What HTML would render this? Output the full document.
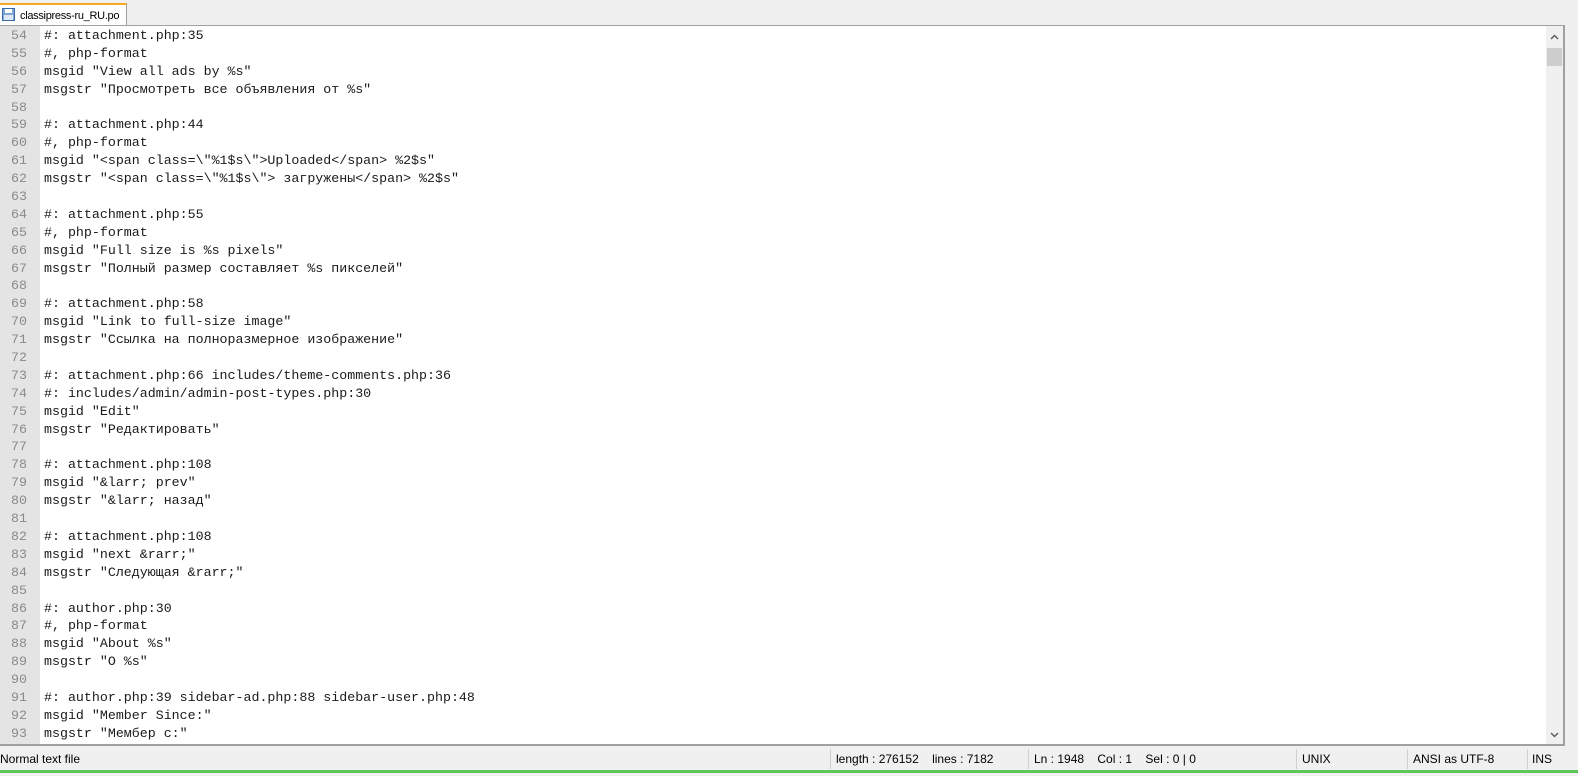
<!DOCTYPE html><html><head><meta charset="utf-8"><style>
body{margin:0;width:1578px;height:776px;background:#f0f0f0;position:relative;overflow:hidden;font-family:"Liberation Sans",sans-serif}
.tabbar{position:absolute;left:0;top:0;width:1578px;height:24px;background:#f0f0f0}
.tab{position:absolute;left:0;top:3px;width:127px;height:22px;background:#fff;border-top:2px solid #f5a623;border-right:1px solid #a0a0a0;box-sizing:border-box;font-size:11px;letter-spacing:-0.3px}
.tab span{position:absolute;left:20px;top:5px}
.ed{position:absolute;left:0;top:25px;width:1565px;height:721px;background:#fff;border-top:1px solid #a0a0a0;border-right:2px solid #a0a0a0;border-bottom:2px solid #a0a0a0;box-sizing:border-box;overflow:hidden}
.gut{position:absolute;left:0;top:0;width:40px;height:100%;background:#e4e4e4}
.lines{position:absolute;left:0;top:1px;font-family:"Liberation Mono",monospace;font-size:13.3px;color:#1a1a1a}
.lines div{height:17.9px;line-height:17.9px;white-space:pre}
.ln{display:inline-block;width:27px;text-align:right;color:#8a8a8a;margin-right:17px}
.sb{position:absolute;left:1546px;top:0;width:17px;height:100%;background:#f0f0f0}
.st{position:absolute;top:747px;height:24px;font-size:12px;line-height:24px;color:#000}
.sep{position:absolute;top:749px;width:1px;height:20px;background:#d0d0d0}
.green{position:absolute;left:0;top:770px;width:1578px;height:3px;background:#5cc85c}
</style></head><body>
<div class="tabbar"><div class="tab">
<svg style="position:absolute;left:2px;top:3px" width="13" height="13" viewBox="0 0 13 13"><rect x="0.5" y="0.5" width="12" height="12" fill="#7fa6d6" stroke="#3a6aa8"/><rect x="3" y="1" width="7" height="4" fill="#fff"/><rect x="2" y="7" width="9" height="5" fill="#dfe8f5"/></svg>
<span>classipress-ru_RU.po</span></div></div>
<div class="ed"><div class="gut"></div>
<div class="lines">
<div><span class="ln">54</span>#: attachment.php:35</div>
<div><span class="ln">55</span>#, php-format</div>
<div><span class="ln">56</span>msgid "View all ads by %s"</div>
<div><span class="ln">57</span>msgstr "Просмотреть все объявления от %s"</div>
<div><span class="ln">58</span></div>
<div><span class="ln">59</span>#: attachment.php:44</div>
<div><span class="ln">60</span>#, php-format</div>
<div><span class="ln">61</span>msgid "&lt;span class=\"%1$s\"&gt;Uploaded&lt;/span&gt; %2$s"</div>
<div><span class="ln">62</span>msgstr "&lt;span class=\"%1$s\"&gt; загружены&lt;/span&gt; %2$s"</div>
<div><span class="ln">63</span></div>
<div><span class="ln">64</span>#: attachment.php:55</div>
<div><span class="ln">65</span>#, php-format</div>
<div><span class="ln">66</span>msgid "Full size is %s pixels"</div>
<div><span class="ln">67</span>msgstr "Полный размер составляет %s пикселей"</div>
<div><span class="ln">68</span></div>
<div><span class="ln">69</span>#: attachment.php:58</div>
<div><span class="ln">70</span>msgid "Link to full-size image"</div>
<div><span class="ln">71</span>msgstr "Ссылка на полноразмерное изображение"</div>
<div><span class="ln">72</span></div>
<div><span class="ln">73</span>#: attachment.php:66 includes/theme-comments.php:36</div>
<div><span class="ln">74</span>#: includes/admin/admin-post-types.php:30</div>
<div><span class="ln">75</span>msgid "Edit"</div>
<div><span class="ln">76</span>msgstr "Редактировать"</div>
<div><span class="ln">77</span></div>
<div><span class="ln">78</span>#: attachment.php:108</div>
<div><span class="ln">79</span>msgid "&amp;larr; prev"</div>
<div><span class="ln">80</span>msgstr "&amp;larr; назад"</div>
<div><span class="ln">81</span></div>
<div><span class="ln">82</span>#: attachment.php:108</div>
<div><span class="ln">83</span>msgid "next &amp;rarr;"</div>
<div><span class="ln">84</span>msgstr "Следующая &amp;rarr;"</div>
<div><span class="ln">85</span></div>
<div><span class="ln">86</span>#: author.php:30</div>
<div><span class="ln">87</span>#, php-format</div>
<div><span class="ln">88</span>msgid "About %s"</div>
<div><span class="ln">89</span>msgstr "О %s"</div>
<div><span class="ln">90</span></div>
<div><span class="ln">91</span>#: author.php:39 sidebar-ad.php:88 sidebar-user.php:48</div>
<div><span class="ln">92</span>msgid "Member Since:"</div>
<div><span class="ln">93</span>msgstr "Мембер с:"</div>
<div><span class="ln">94</span></div>
</div>
<div class="sb">
<svg style="position:absolute;left:4px;top:8px" width="9" height="6" viewBox="0 0 9 6"><path d="M1 5L4.5 1.5L8 5" stroke="#606060" stroke-width="1.5" fill="none"/></svg>
<div style="position:absolute;left:1px;top:22px;width:15px;height:18px;background:#cdcdcd"></div>
<svg style="position:absolute;left:4px;bottom:6px" width="9" height="6" viewBox="0 0 9 6"><path d="M1 1L4.5 4.5L8 1" stroke="#606060" stroke-width="1.5" fill="none"/></svg>
</div></div>
<div class="st" style="left:0">Normal text file</div>
<div class="sep" style="left:830px"></div><div class="st" style="left:836px">length : 276152&nbsp;&nbsp;&nbsp;&nbsp;lines : 7182</div>
<div class="sep" style="left:1028px"></div><div class="st" style="left:1034px">Ln : 1948&nbsp;&nbsp;&nbsp;&nbsp;Col : 1&nbsp;&nbsp;&nbsp;&nbsp;Sel : 0 | 0</div>
<div class="sep" style="left:1296px"></div><div class="st" style="left:1302px">UNIX</div>
<div class="sep" style="left:1407px"></div><div class="st" style="left:1413px">ANSI as UTF-8</div>
<div class="sep" style="left:1527px"></div><div class="st" style="left:1532px">INS</div>
<div class="green"></div>
</body></html>
